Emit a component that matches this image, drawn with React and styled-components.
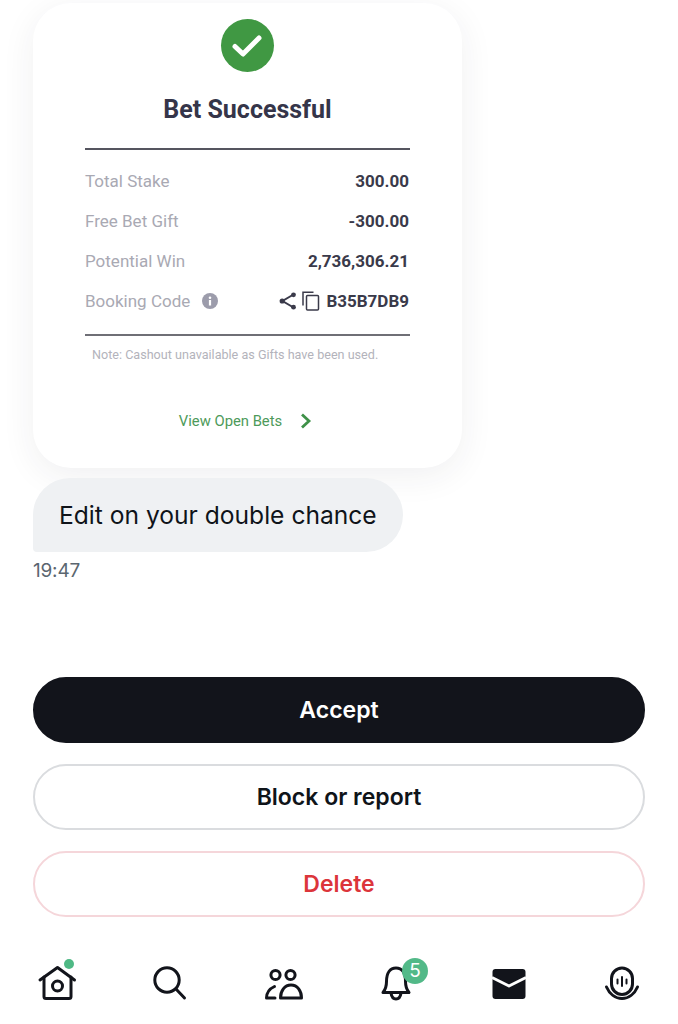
import React from "react";
import styled, { createGlobalStyle } from "styled-components";

const Global = createGlobalStyle`
  html, body { margin: 0; padding: 0; background: #fff; }
  * { box-sizing: border-box; }
`;

const Page = styled.div`
  width: 678px; height: 1024px; overflow: hidden; background: #fff;
  padding-top: 3px; display: flex; flex-direction: column;
  font-family: Inter, "Liberation Sans", sans-serif;
`;
const Thread = styled.div`
  padding: 0 33px; display: flex; flex-direction: column; align-items: flex-start;
`;
const Card = styled.section`
  width: 429px; height: 465px; border-radius: 38px; background: #fff;
  box-shadow: 0 8px 34px rgba(40, 44, 60, 0.07);
  padding: 16px 52px 0; display: flex; flex-direction: column; align-items: stretch;
  font-family: Roboto, "Liberation Sans", sans-serif;
`;
const CheckBadge = styled.div`
  width: 53px; height: 53px; border-radius: 50%; background: #409843;
  align-self: center; margin-right: 1px; display: flex; align-items: center; justify-content: center;
`;
const Title = styled.h1`
  margin: 22px 0 22px; height: 32px; line-height: 32px; text-align: center; font-size: 25px; font-weight: 700;
  color: #353549;
`;
const Rule = styled.hr`
  margin: 0; border: 0; height: ${(p) => p.$h || 1.5}px; background: ${(p) => p.$c || "#55555f"};
`;
const Rows = styled.div`
  padding: 11px 0 13px; display: flex; flex-direction: column;
`;
const Row = styled.div`
  height: 40px; display: flex; align-items: center; justify-content: space-between;
`;
const Label = styled.span`
  font-size: 17px; color: #a9a9b3; display: flex; align-items: center; gap: 12px;
`;
const Value = styled.span`
  font-size: 17px; font-weight: 700; color: #3a3a4a; display: flex; align-items: center;
  padding-right: 1px;
`;
const Tools = styled.span`
  display: flex; align-items: center; gap: 4px; margin-right: 6px;
`;
const Note = styled.p`
  margin: 12px 0 0 7px; font-size: 12.6px; line-height: 14px; color: #b3b3bb;
`;
const OpenBets = styled.div`
  margin-top: 50px; display: flex; align-items: center; justify-content: center; gap: 18px;
  padding-right: 4px;
  font-size: 14.8px; line-height: 18px; font-weight: 400; color: #4d9a5a;
`;
const Bubble = styled.div`
  margin-top: 10px; height: 74px; width: 370px; padding-left: 26px; display: flex; align-items: center;
  background: #eff1f3; color: #0f1419; font-size: 24.6px;
  border-radius: 37px 37px 37px 4px;
`;
const Time = styled.time`
  margin-top: 7px; font-size: 19px; line-height: 23px; color: #5b6670; letter-spacing: -0.2px;
`;
const Actions = styled.div`
  margin-top: 95px; padding: 0 33px; display: flex; flex-direction: column; gap: 21px;
`;
const Action = styled.button`
  height: 66px; width: 100%; border-radius: 33px; font-family: inherit; font-size: 23px; font-weight: 600;
  padding: 0; background: ${(p) => p.$bg}; color: ${(p) => p.$fg};
  border: 2px solid ${(p) => p.$line};
`;
const Nav = styled.nav`
  margin-top: 46px; display: grid; grid-template-columns: repeat(6, 113px);
`;
const NavItem = styled.div`
  position: relative; height: 40px; display: flex; justify-content: center;
`;
const Dot = styled.span`
  position: absolute; left: 64px; top: -4px; width: 10px; height: 10px; border-radius: 50%; background: #4fb985;
`;
const Count = styled.span`
  position: absolute; left: 63px; top: -5px; width: 26px; height: 26px; border-radius: 50%;
  background: #52b988; color: #fff; font-size: 19px; line-height: 26px; text-align: center;
`;

const ink = "#12141b";
const Icon = ({ children, size = 40 }) => (
  <svg width={size} height={size} viewBox="0 0 40 40" fill="none" stroke={ink} strokeWidth="3" strokeLinecap="round" strokeLinejoin="round">
    {children}
  </svg>
);

const ShareIcon = () => (
  <svg width="20" height="20" viewBox="0 0 20 20" fill="#3a3a4a" stroke="#3a3a4a">
    <path d="M15.500 3.500 4.500 10l11 6.500" fill="none" strokeWidth="2" />
    <circle cx="15.500" cy="3.800" r="2.400" stroke="none" />
    <circle cx="4.200" cy="10" r="2.600" stroke="none" />
    <circle cx="15.500" cy="16.200" r="2.400" stroke="none" />
  </svg>
);
const CopyIcon = () => (
  <svg width="18" height="20" viewBox="0 0 18 20" fill="none" stroke="#3a3a4a" strokeWidth="1.500">
    <path d="M1 14.500V1.200h10.500" />
    <rect x="4.500" y="4.500" width="12" height="14.500" rx="1" />
  </svg>
);
const InfoIcon = () => (
  <svg width="16" height="16" viewBox="0 0 16 16">
    <circle cx="8" cy="8" r="8" fill="#9c9cab" />
    <rect x="6.900" y="7" width="2.200" height="5.500" fill="#fff" />
    <circle cx="8" cy="4.700" r="1.300" fill="#fff" />
  </svg>
);

export default function App() {
  return (
    <Page>
      <Global />
      <Thread>
        <Card>
          <CheckBadge>
            <svg width="34" height="28" viewBox="0 0 34 28" fill="none" stroke="#fff" strokeWidth="5" strokeLinecap="round" strokeLinejoin="round">
              <path d="M5 14.500 13 22 29 6" />
            </svg>
          </CheckBadge>
          <Title>Bet Successful</Title>
          <Rule />
          <Rows>
            <Row><Label>Total Stake</Label><Value>300.00</Value></Row>
            <Row><Label>Free Bet Gift</Label><Value>-300.00</Value></Row>
            <Row><Label>Potential Win</Label><Value>2,736,306.21</Value></Row>
            <Row>
              <Label>Booking Code <InfoIcon /></Label>
              <Value><Tools><ShareIcon /><CopyIcon /></Tools>B35B7DB9</Value>
            </Row>
          </Rows>
          <Rule $c="#6f6f76" $h={2} />
          <Note>Note: Cashout unavailable as Gifts have been used.</Note>
          <OpenBets>
            View Open Bets
            <svg width="12" height="16" viewBox="0 0 12 16" fill="none" stroke="#3f9148" strokeWidth="2.800">
              <path d="M2 1.500 9 8l-7 6.500" />
            </svg>
          </OpenBets>
        </Card>
        <Bubble>Edit on your double chance</Bubble>
        <Time>19:47</Time>
      </Thread>
      <Actions>
        <Action $bg="#12141b" $fg="#fff" $line="#12141b">Accept</Action>
        <Action $bg="#fff" $fg="#0f1419" $line="#dadcdf">Block or report</Action>
        <Action $bg="#fff" $fg="#dc353b" $line="#f5d6da">Delete</Action>
      </Actions>
      <Nav>
        <NavItem>
          <Icon>
            <path d="M3 17 20.500 4.500 37.500 17" />
            <path d="M7 14v19.500a2 2 0 0 0 2 2h23a2 2 0 0 0 2-2V14" />
            <circle cx="20.500" cy="23" r="5" />
          </Icon>
          <Dot />
        </NavItem>
        <NavItem>
          <Icon>
            <circle cx="17" cy="17" r="12.200" />
            <path d="M26 26 34.500 35" />
          </Icon>
        </NavItem>
        <NavItem>
          <Icon>
            <circle cx="12.500" cy="12" r="4.600" />
            <circle cx="27.500" cy="12" r="4.600" />
            <path d="M17.500 35c0-7 4-13 10.500-13s10.500 6 10.500 13z" />
            <path d="M12 35H3.500c0-5 2.500-9 8-11.500" />
          </Icon>
        </NavItem>
        <NavItem>
          <Icon>
            <path d="M7 29.500c2.500-3 3.500-5 3.500-11C10.500 10 14 5 20 5s9.500 5 9.500 13.500c0 6 1 8 3.500 11z" />
            <path d="M15 30c.5 3.500 2.500 6 5 6s4.500-2.500 5-6" />
          </Icon>
          <Count>5</Count>
        </NavItem>
        <NavItem>
          <Icon>
            <rect x="3.500" y="6" width="33" height="30" rx="3" fill={ink} stroke="none" />
            <path d="M3 14.500 20 23l17-8.500" stroke="#fff" strokeLinecap="butt" />
          </Icon>
        </NavItem>
        <NavItem>
          <Icon>
            <rect x="9.500" y="5" width="21" height="26.500" rx="10.500" />
            <path d="M4.500 24c3 7 9 11.500 15.500 11.500S32.500 31 35.500 24" />
            <path d="M15.500 16.500v4M20 14v9M24.500 16.500v4" strokeWidth="2" />
          </Icon>
        </NavItem>
      </Nav>
    </Page>
  );
}
